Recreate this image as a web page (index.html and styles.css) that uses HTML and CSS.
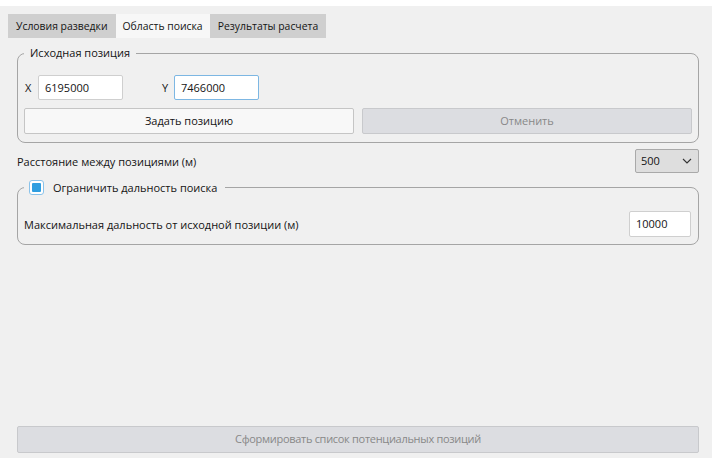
FILE: index.html
```html
<!DOCTYPE html>
<html lang="ru">
<head>
<meta charset="utf-8">
<link rel="stylesheet" href="styles.css">
</head>
<body>
<div class="window">
  <div class="tabs">
    <div class="tab">Условия разведки</div>
    <div class="tab active">Область поиска</div>
    <div class="tab">Результаты расчета</div>
  </div>
  <div class="content">
    <fieldset class="group">
      <legend class="legend">Исходная позиция</legend>
      <div class="coords">
        <span class="lbl">X</span>
        <div class="input w85">6195000</div>
        <span class="lbl ylbl">Y</span>
        <div class="input w85 focus">7466000</div>
      </div>
      <div class="buttons">
        <div class="btn">Задать позицию</div>
        <div class="btn disabled">Отменить</div>
      </div>
    </fieldset>
    <div class="row">
      <span>Расстояние между позициями (м)</span>
      <div class="combo">500
        <svg class="chev" width="10" height="6" viewBox="0 0 10 6"><path d="M1 1 L5 5 L9 1" fill="none" stroke="#333" stroke-width="1.1"/></svg>
      </div>
    </div>
    <fieldset class="group group2">
      <legend class="legend legend2"><span class="check"><span class="checkfill"></span></span>Ограничить дальность поиска</legend>
      <div class="row2">
        <span>Максимальная дальность от исходной позиции (м)</span>
        <div class="input w62">10000</div>
      </div>
    </fieldset>
    <div class="spacer"></div>
    <div class="btn disabled big">Сформировать список потенциальных позиций</div>
  </div>
</div>
</body>
</html>
```

FILE: styles.css
```css
html, body {
  margin: 0;
  padding: 0;
  background: #ffffff;
}
body {
  font-family: "Open Sans", "Noto Sans", sans-serif;
  font-size: 11px;
  color: #141414;
}
.window {
  margin-top: 6px;
  width: 712px;
  height: 452px;
  background: #f0f0f0;
  display: flex;
  flex-direction: column;
}
.tabs {
  display: flex;
  margin: 8px 0 0 8px;
  height: 24px;
}
.tab {
  background: #cfcfcf;
  padding: 0 8px;
  line-height: 24px;
  height: 24px;
  font-size: 10.4px;
}
.tab.active {
  background: #f7f7f7;
  padding: 0 7px;
}
.content {
  flex: 1;
  display: flex;
  flex-direction: column;
  padding: 0 13px 5px 17px;
}
.group {
  margin: 8px 0 0 0;
  padding: 15px 6px 8px 6px;
  border: 1px solid #a5a5a5;
  border-radius: 8px;
  min-width: 0;
}
.legend {
  padding: 0 6px;
  margin-left: 0;
  line-height: 14px;
}
.coords {
  display: flex;
  align-items: center;
  height: 25px;
}
.lbl {
  width: 13px;
  padding-left: 1px;
}
.ylbl {
  margin-left: 38px;
  width: 12px;
}
.input {
  box-sizing: border-box;
  height: 25px;
  background: #ffffff;
  border: 1px solid #cfcfcf;
  border-radius: 2px;
  padding: 0 6px;
  line-height: 23px;
}
.input.focus {
  border-color: #7db7e3;
}
.w85 { width: 85px; }
.w62 { width: 62px; }
.buttons {
  display: flex;
  gap: 8px;
  margin-top: 8px;
}
.btn {
  flex: 1;
  box-sizing: border-box;
  height: 26px;
  line-height: 24px;
  text-align: center;
  background: #f8f8f8;
  border: 1px solid #c5c5c5;
  border-radius: 2px;
}
.btn.disabled {
  background: #dcdde1;
  color: #888888;
  border-color: #c8c9cc;
}
.row {
  display: flex;
  justify-content: space-between;
  align-items: center;
  margin-top: 6px;
  height: 24px;
}
.combo {
  box-sizing: border-box;
  width: 64px;
  height: 24px;
  background: #dedede;
  border: 1px solid #a9a9a9;
  border-radius: 2px;
  padding: 0 6px 0 5px;
  display: flex;
  align-items: center;
  justify-content: space-between;
  line-height: 22px;
}
.group2 {
  margin-top: 7px;
  padding: 16px 7px 7px 6px;
}
.legend2 {
  display: flex;
  align-items: center;
  margin-left: 0;
  padding: 0 8px 0 5px;
}
.check {
  box-sizing: border-box;
  width: 15px;
  height: 15px;
  border: 1px solid #89c2ea;
  border-radius: 3px;
  background: #ffffff;
  display: flex;
  align-items: center;
  justify-content: center;
  margin-right: 9px;
}
.checkfill {
  width: 9px;
  height: 9px;
  background: #2f9ee0;
  border-radius: 1px;
}
.row2 {
  display: flex;
  justify-content: space-between;
  align-items: center;
  height: 26px;
}
.row2 .input {
  height: 26px;
  line-height: 24px;
}
.spacer {
  flex: 1;
}
.big {
  flex: none;
  height: 27px;
  letter-spacing: -0.3px;
}
```
